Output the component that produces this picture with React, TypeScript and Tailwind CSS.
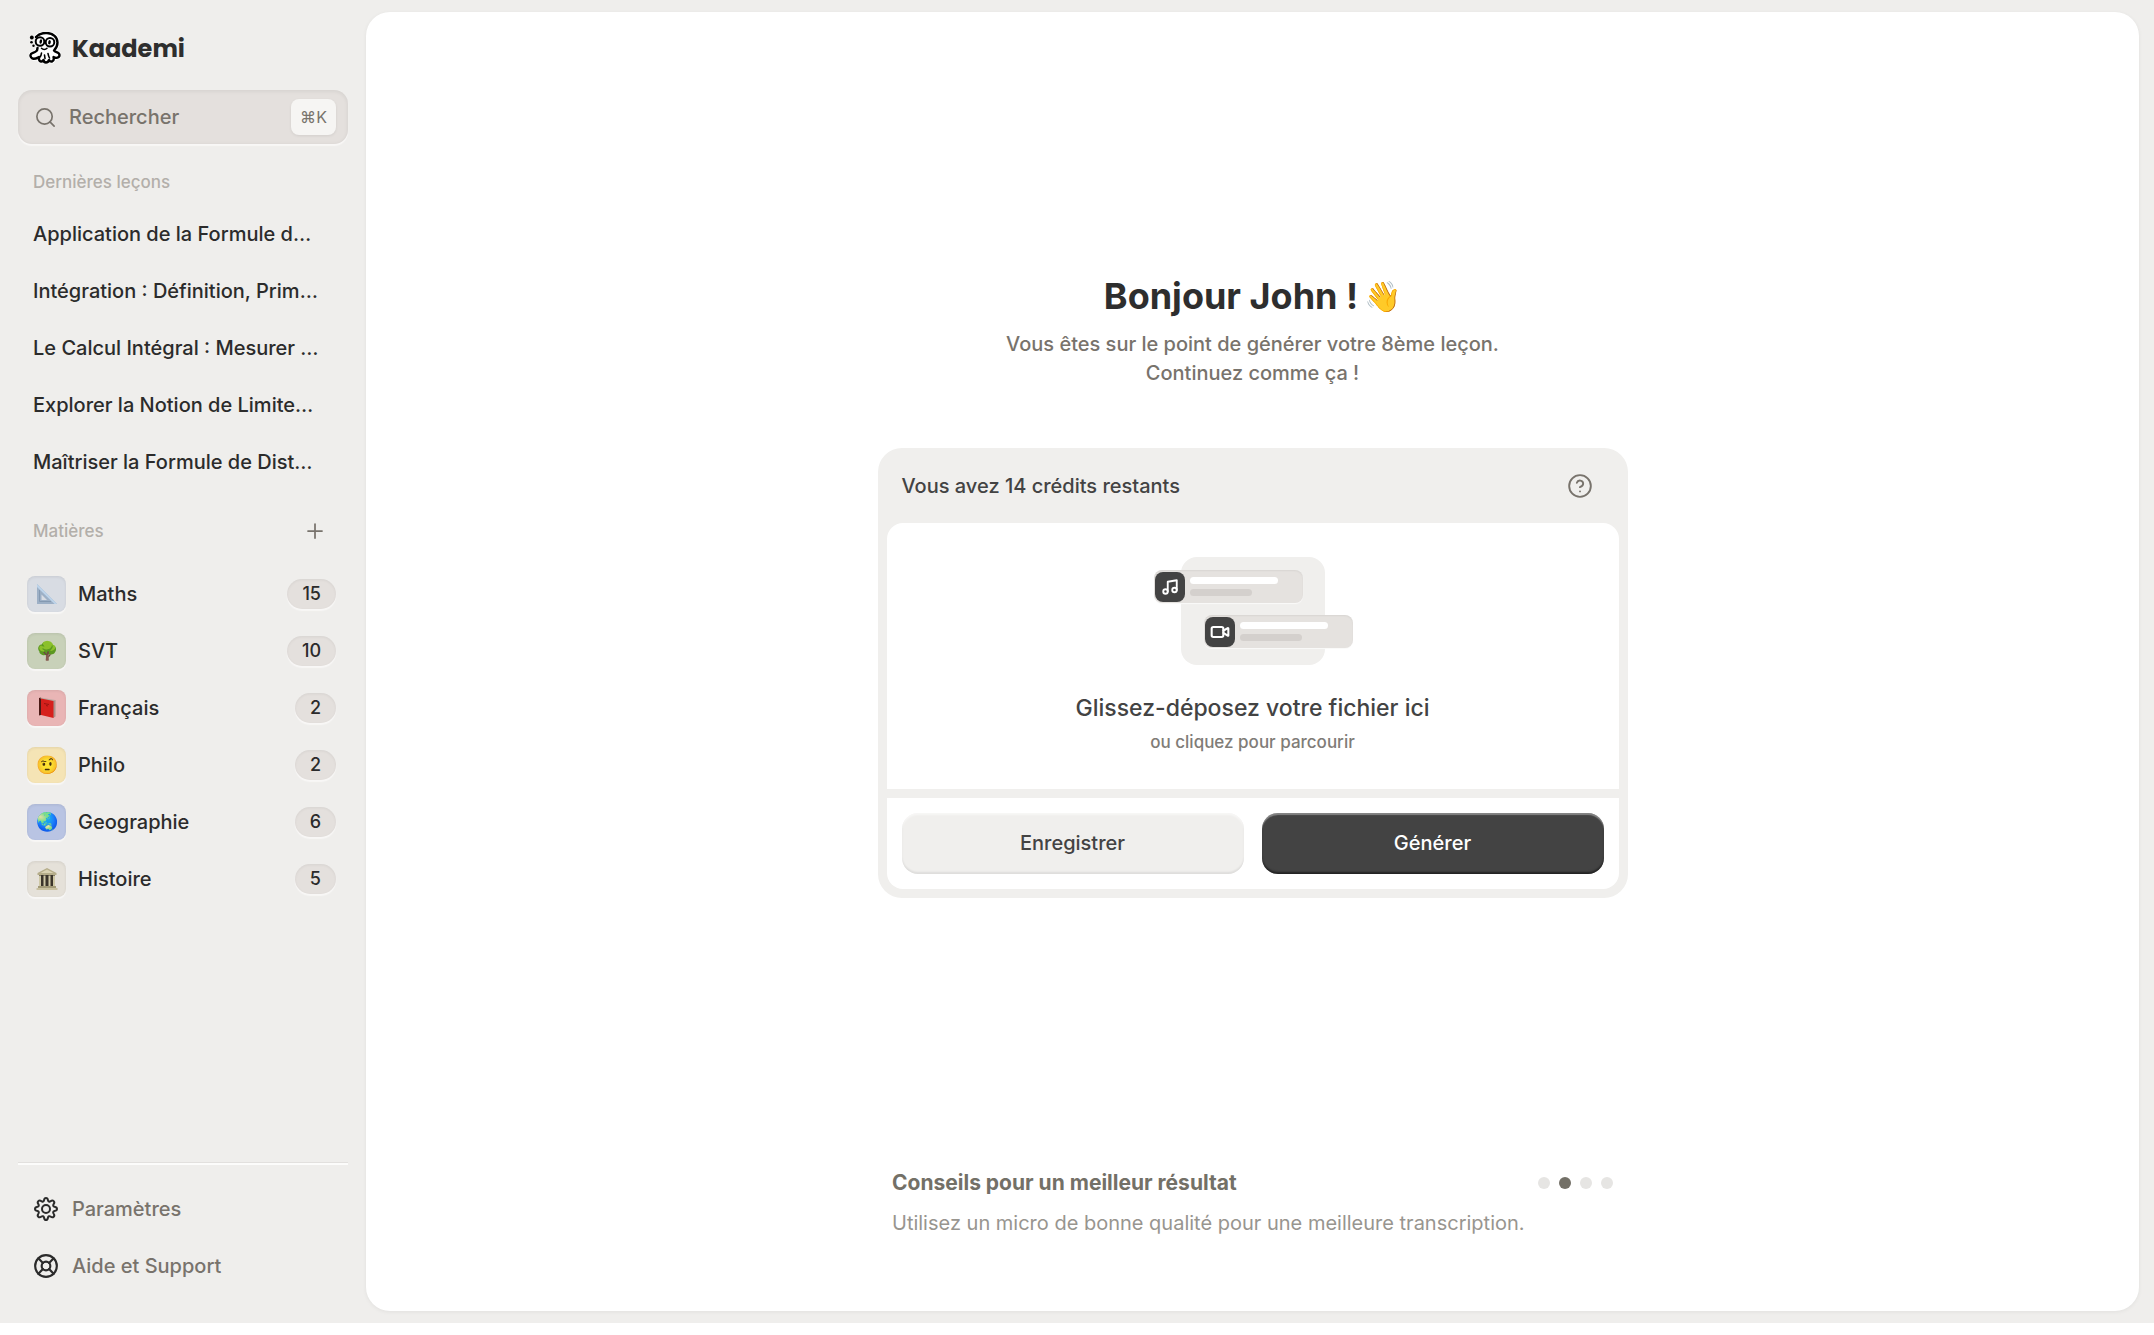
import React from "react";
import { CircleHelp, LifeBuoy, Music, Plus, Search, Video } from "lucide-react";

type Subject = {
  name: string;
  icon: React.ReactNode;
  count: number;
  color: string;
};

const SetSquare = () => (
  <svg viewBox="0 0 22 22" className="size-[22px]">
    <path d="M1 1v20h20z" fill="#9db0c6" />
    <path d="M1 1l20 20h-2.500L1 4z" fill="#bcd3ea" />
    <path d="M5.500 11.500v5.500h5.500z" fill="#d8dce3" />
    <path d="M3.500 7v11.500H15" fill="none" stroke="#8499b1" strokeWidth="1" />
  </svg>
);

const Book = () => (
  <svg viewBox="0 0 22 22" className="size-[22px]">
    <path d="M3 1l2-.5v17.500l-2 .500z" fill="#4b1a16" />
    <path d="M4 .500l15 2.500-2 1.500L5 2z" fill="#b9a9a2" />
    <path d="M17 4l2.500-1v16.500L17 21z" fill="#a8938c" />
    <path d="M5 1.500l12.500 2.500v17L5 18z" fill="#d6201c" />
    <path d="M8 6.500l5 1M10 8.500l2 .500" stroke="#9c1411" strokeWidth="1" />
  </svg>
);

const Museum = () => (
  <svg viewBox="0 0 22 22" className="size-[22px]">
    <path d="M11 0l9.500 5v2h-19V5z" fill="#b5ad8a" />
    <path d="M11 1.500l6.500 3.500h-13z" fill="#d9d2b2" />
    <path d="M3 7h16v11.500H3z" fill="#3b352b" />
    <path d="M4 7.500v11M8.500 7.500v11M13.500 7.500v11M18 7.500v11" stroke="#cfc8a6" strokeWidth="2" />
    <path d="M2 18h18v2H2z" fill="#a39b78" />
    <path d="M.500 20h21v2H.500z" fill="#c9c1a0" />
  </svg>
);

const lessons = [
  "Application de la Formule d…",
  "Intégration : Définition, Prim…",
  "Le Calcul Intégral : Mesurer …",
  "Explorer la Notion de Limite…",
  "Maîtriser la Formule de Dist…",
];

const subjects: Subject[] = [
  { name: "Maths", icon: <SetSquare />, count: 15, color: "bg-[#d8dce3]" },
  { name: "SVT", icon: "🌳", count: 10, color: "bg-[#c8d1b9]" },
  { name: "Français", icon: <Book />, count: 2, color: "bg-[#e9b5b5]" },
  { name: "Philo", icon: "🤨", count: 2, color: "bg-[#f5e4b5]" },
  { name: "Geographie", icon: "🌏", count: 6, color: "bg-[#b9c4e3]" },
  { name: "Histoire", icon: <Museum />, count: 5, color: "bg-[#e5e1d9]" },
];

const tips = [
  "Parlez distinctement et à un rythme régulier.",
  "Utilisez un micro de bonne qualité pour une meilleure transcription.",
  "Choisissez un endroit calme.",
  "Évitez les fichiers trop longs.",
];

const activeTip = 1;

const logoBody =
  "M7 5C10 1.500 14 .8 18 1c6 .3 10.500 4 10.500 9.500 0 3.500-1.500 6-3.500 8 1 2 5.500 1.500 5.500 4.500s-3.500 3.500-6 2c.5 2 .3 4-1.500 4.500-1.500.3-2.500-.5-3-1.500-.5 1.500-1.500 2.500-3 2.500s-2.300-1-2.500-2.500c-.8 1.300-1.800 1.800-3 1.300-1.500-.5-1.700-2.300-1.500-4.300-2 1-3 2-5.500 1.800C2.800 26.600 1.300 25 1.500 23c.3-2.500 3.500-1.500 6.500-4.500L8.500 16";

const Logo = () => (
  <svg viewBox="0 0 32 32" className="size-8" fill="none" stroke="#000" strokeLinecap="round" strokeLinejoin="round">
    <path d={logoBody} fill="#fff" stroke="#fff" strokeWidth="4" />
    <path d={logoBody} fill="#fff" strokeWidth="2.400" />
    <path d="M12.500 21c-.2 2-.6 3-1.500 4M15.500 23l.5 3.500M19 21.500c.3 2 1 3.500 1.500 4.500" strokeWidth="1.600" />
    <path d="M12.500 16.200c1.500 1.600 4 1.600 5.500 0" strokeWidth="1.500" />
    <circle cx="11" cy="9.500" r="4.300" fill="#fff" strokeWidth="2" />
    <circle cx="21" cy="10.300" r="4.300" fill="#fff" strokeWidth="2" />
    <ellipse cx="11.800" cy="9.500" rx="1.300" ry="2.200" fill="#000" stroke="none" transform="rotate(12 11.800 9.500)" />
    <ellipse cx="20.500" cy="10.300" rx="1.300" ry="2.200" fill="#000" stroke="none" transform="rotate(12 20.500 10.300)" />
    <g fill="#000" stroke="none">
      <circle cx="2.800" cy="5.500" r="1.900" />
      <circle cx="2.500" cy="10.200" r="1.300" />
      <circle cx="4.500" cy="13.800" r="1.200" />
    </g>
  </svg>
);

const Gear = () => (
  <svg
    viewBox="0 0 24 24"
    className="size-6 overflow-visible text-[#2b2b2b]"
    fill="none"
    stroke="currentColor"
    strokeWidth="2"
    strokeLinejoin="round"
  >
    <path d="M12 1c1.300 0 1.800 1 2 2.300.2 1.200 1.500 1.700 2.500 1 1-.8 2.200-1.200 3.200-.2s.6 2.200-.2 3.200c-.7 1-.2 2.300 1 2.500 1.300.2 2.500.7 2.500 2.200s-1.200 1.800-2.500 2c-1.200.2-1.700 1.500-1 2.500.8 1 1.200 2.200.2 3.200s-2.200.6-3.200-.2c-1-.7-2.300-.2-2.500 1-.2 1.300-.7 2.500-2 2.500s-1.800-1.200-2-2.500c-.2-1.200-1.500-1.700-2.500-1-1 .8-2.200 1.200-3.200.2s-.6-2.200.2-3.200c.7-1 .2-2.300-1-2.500-1.300-.2-2.500-.7-2.500-2s1.200-2 2.500-2.200c1.200-.2 1.700-1.500 1-2.500-.8-1-1.200-2.200-.2-3.200s2.200-.6 3.200.2c1 .7 2.300.2 2.500-1C10.200 2 10.700 1 12 1z" />
    <circle cx="12" cy="12" r="4" />
  </svg>
);

type FileRowProps = {
  icon: React.ReactNode;
  className: string;
};

const FileRow = ({ icon, className }: FileRowProps) => (
  <div
    className={`absolute flex h-[33px] w-[149px] items-center gap-[5px] rounded-lg bg-[#e5e2df] pl-px shadow-[inset_0_1px_2px_rgba(0,0,0,0.06),0_1px_1px_#fafaf9] ${className}`}
  >
    <span className="flex size-[30px] shrink-0 items-center justify-center rounded-lg bg-[#434343] text-white">
      {icon}
    </span>
    <span className="flex flex-col gap-[5px]">
      <span className="h-[7px] w-[88px] rounded-full bg-white" />
      <span className="h-[7px] w-[62px] rounded-full bg-[#d4d0cd]" />
    </span>
  </div>
);

const Sidebar = () => (
  <aside className="flex w-[366px] shrink-0 flex-col px-[18px]">
    <a href="#" className="mt-8 flex h-8 items-center gap-[11px] pl-[11px]">
      <Logo />
      <span className="pt-0.5 font-[Poppins,Inter,sans-serif] text-2xl leading-8 font-bold text-[#2e2e2e]">
        Kaademi
      </span>
    </a>

    <label className="mt-[26px] flex h-[54px] items-center rounded-[14px] bg-[#e4e0dd] pr-3 pl-4 shadow-[inset_0_1px_4px_rgba(0,0,0,0.08),0_2px_1px_#f8f7f6]">
      <Search className="size-[23px] text-[#78736c]" strokeWidth={1.75} />
      <input
        type="text"
        placeholder="Rechercher"
        aria-label="Rechercher"
        className="ml-3 min-w-0 flex-1 bg-transparent text-xl font-medium text-[#78736c] outline-none placeholder:text-[#78736c]"
      />
      <kbd className="flex h-9 w-[45px] items-center justify-center rounded-lg bg-[#f6f5f3] font-[Inter,'DejaVu_Sans',sans-serif] text-base text-[#78736c] shadow-[0_1px_3px_rgba(0,0,0,0.08)]">
        ⌘K
      </kbd>
    </label>

    <h2 className="mt-[26px] pl-[15px] text-[17px] leading-6 font-medium text-[#b3afaa]">Dernières leçons</h2>
    <ul className="mt-[11px]">
      {lessons.map((lesson) => (
        <li key={lesson} className="flex h-[57px] items-center px-[15px]">
          <a href="#" className="truncate text-xl font-medium text-[#2b2b2b]">
            {lesson}
          </a>
        </li>
      ))}
    </ul>

    <div className="mt-[29px] flex items-center justify-between pr-[21px] pl-[15px]">
      <h2 className="text-[17px] leading-6 font-medium text-[#b3afaa]">Matières</h2>
      <button type="button" aria-label="Ajouter une matière">
        <Plus className="size-6 text-[#78736c]" strokeWidth={1.75} />
      </button>
    </div>
    <ul className="mt-[22px]">
      {subjects.map((subject) => (
        <li key={subject.name}>
          <a href="#" className="flex h-[57px] items-center pr-3 pl-[9px]">
            <span
              className={`flex h-9 w-[39px] items-center justify-center rounded-lg text-lg shadow-[inset_0_1px_3px_rgba(0,0,0,0.08),0_2px_1px_#f8f7f6] ${subject.color}`}
            >
              {subject.icon}
            </span>
            <span className="ml-3 flex-1 text-xl font-medium text-[#2b2b2b]">{subject.name}</span>
            <span className="flex h-[30px] items-center rounded-full bg-[#e4e0dd] px-[15px] text-lg font-medium text-[#2b2b2b] shadow-[inset_0_1px_3px_rgba(0,0,0,0.06),0_2px_1px_#f8f7f6]">
              {subject.count}
            </span>
          </a>
        </li>
      ))}
    </ul>

    <nav className="mt-auto border-t border-[#e2e0de] pb-[29px] shadow-[inset_0_2px_0_#fcfcfb]">
      <a href="#" className="mt-[17px] flex h-[57px] items-center gap-3.5 pl-4 text-xl font-medium text-[#78736c]">
        <Gear />
        Paramètres
      </a>
      <a href="#" className="flex h-[57px] items-center gap-3.5 pl-4 text-xl font-medium text-[#78736c]">
        <LifeBuoy className="-mx-px size-[26px] text-[#2b2b2b]" />
        Aide et Support
      </a>
    </nav>
  </aside>
);

const UploadCard = () => (
  <section className="mt-[60px] w-full max-w-[750px] rounded-3xl bg-[#f0efed] px-[9px] pb-[9px]">
    <div className="flex h-[75px] items-center justify-between pr-[26px] pl-[15px]">
      <p className="text-xl font-medium text-[#434343]">Vous avez 14 crédits restants</p>
      <button type="button" aria-label="Aide sur les crédits">
        <CircleHelp className="size-[26px] text-[#78736c]" strokeWidth={1.75} />
      </button>
    </div>
    <label className="flex h-[266px] cursor-pointer flex-col items-center rounded-t-2xl bg-white">
      <input type="file" className="sr-only" />
      <span className="relative mt-[34px] block h-[108px] w-[144px] rounded-2xl bg-[#f0efed]">
        <FileRow icon={<Music className="size-[18px]" strokeWidth={2.5} />} className="top-[13px] -left-[27px]" />
        <FileRow icon={<Video className="size-5" strokeWidth={2.5} />} className="top-[58px] left-[23px]" />
      </span>
      <span className="mt-[27px] text-[23px] leading-8 font-medium text-[#434343]">
        Glissez-déposez votre fichier ici
      </span>
      <span className="mt-1.5 text-[17px] leading-6 font-medium text-[#807c77]">ou cliquez pour parcourir</span>
    </label>
    <div className="mt-[9px] flex gap-[18px] rounded-b-2xl bg-white px-[15px] pt-[15px] pb-[15px]">
      <button
        type="button"
        className="h-[61px] flex-1 rounded-2xl bg-[#f0efed] pb-0.5 text-xl font-medium text-[#434343] shadow-[inset_0_-2px_2px_rgba(0,0,0,0.08),inset_0_2px_2px_rgba(255,255,255,0.5)]"
      >
        Enregistrer
      </button>
      <button
        type="button"
        className="h-[61px] flex-1 rounded-2xl bg-[#434343] pb-0.5 text-xl font-medium text-white shadow-[inset_0_-2px_2px_rgba(0,0,0,0.5),inset_0_2px_1px_rgba(255,255,255,0.35)]"
      >
        Générer
      </button>
    </div>
  </section>
);

const Tips = () => (
  <section className="mt-auto mb-[74px] w-full max-w-[721px]">
    <div className="flex items-center justify-between">
      <h2 className="text-[21px] leading-7 font-bold text-[#737067]">Conseils pour un meilleur résultat</h2>
      <div className="flex gap-[9px]">
        {tips.map((tip, index) => (
          <button
            key={tip}
            type="button"
            aria-label={`Conseil ${index + 1}`}
            className={`size-3 rounded-full ${index === activeTip ? "bg-[#737067]" : "bg-[#e6e5e3]"}`}
          />
        ))}
      </div>
    </div>
    <p className="mt-3 text-xl leading-7 text-[#98958f]">{tips[activeTip]}</p>
  </section>
);

export default function App() {
  return (
    <div className="h-screen bg-white pb-3 font-[Inter,sans-serif]">
      <div className="flex h-full bg-[#efeeec]">
        <Sidebar />
        <main className="my-3 mr-[15px] flex flex-1 flex-col items-center rounded-3xl bg-white shadow-[0_1px_4px_rgba(0,0,0,0.06)]">
          <h1 className="mt-[261px] flex items-center gap-1.5 text-4xl leading-[46px] font-bold text-[#2e2e2e]">
            Bonjour John ! <span className="text-3xl leading-[46px]">👋</span>
          </h1>
          <p className="mt-[11px] text-center text-xl leading-[29px] font-medium text-[#78736c]">
            Vous êtes sur le point de générer votre 8ème leçon.
            <br />
            Continuez comme ça !
          </p>
          <UploadCard />
          <Tips />
        </main>
      </div>
    </div>
  );
}
